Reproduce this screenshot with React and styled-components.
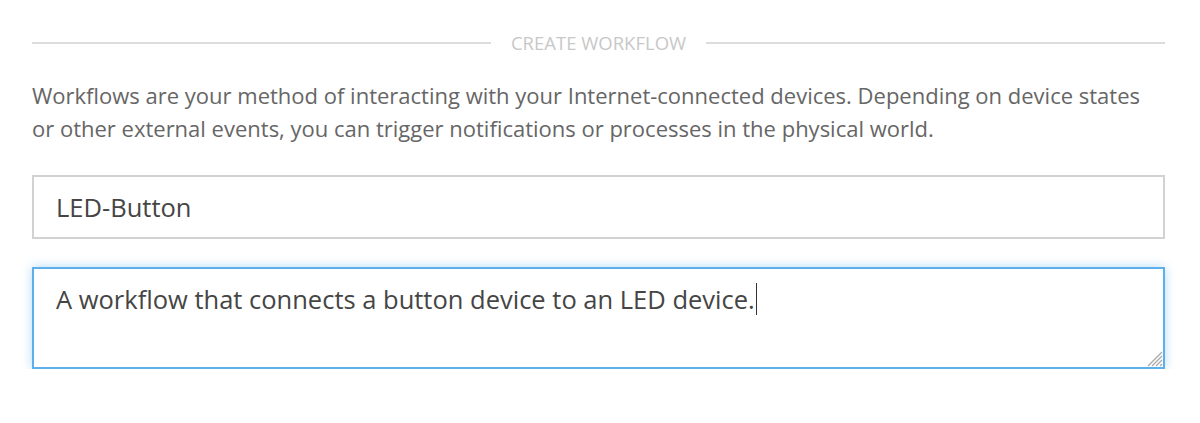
import styled, { createGlobalStyle } from 'styled-components';

const GlobalStyle = createGlobalStyle`
  html, body {
    margin: 0;
    padding: 0;
    background: #fff;
  }
  body {
    font-family: 'Open Sans', 'Noto Sans', sans-serif;
  }
`;

const Page = styled.div`
  padding: 31px 35px 0 32px;
`;

const SectionHeader = styled.div`
  display: flex;
  align-items: center;
  gap: 20px;

  &::before,
  &::after {
    content: '';
    flex: 1;
    height: 2px;
    background: #dcdcdc;
  }
`;

const SectionTitle = styled.h3`
  margin: 0;
  font-size: 18.5px;
  font-weight: 400;
  text-transform: uppercase;
  color: #c8c8c8;
  line-height: 24px;
`;

const Intro = styled.p`
  margin: 24px 0 0;
  font-size: 22px;
  line-height: 33px;
  color: #666;
`;

const Field = styled.div`
  position: relative;
  box-sizing: border-box;
  margin-top: ${({ $gap }) => $gap}px;
  height: ${({ $height }) => $height}px;
  padding: ${({ $multi }) => ($multi ? '14px 22px' : '0 22px')};
  display: flex;
  align-items: ${({ $multi }) => ($multi ? 'flex-start' : 'center')};
  border: 2px solid ${({ $focused }) => ($focused ? '#5eb0ec' : '#d2d2d2')};
  box-shadow: ${({ $focused }) => ($focused ? '0 0 10px rgba(94, 176, 236, 0.45)' : 'none')};
  font-size: 25.5px;
  line-height: 32px;
  color: #454545;
`;

const Caret = styled.span`
  display: inline-block;
  width: 1px;
  height: 32px;
  margin-left: 1px;
  vertical-align: top;
  background: #333;
`;

const Grip = styled.svg`
  position: absolute;
  right: 0;
  bottom: 0;
`;

export default function App() {
  return (
    <>
      <GlobalStyle />
      <Page>
        <SectionHeader>
          <SectionTitle>Create Workflow</SectionTitle>
        </SectionHeader>
        <Intro>
          Workflows are your method of interacting with your Internet-connected devices. Depending on device states
          <br />
          or other external events, you can trigger notifications or processes in the physical world.
        </Intro>
        <Field $gap={30} $height={64}>LED-Button</Field>
        <Field $gap={28} $height={102} $multi $focused>
          <span>
            A workflow that connects a button device to an LED device.
            <Caret />
          </span>
          <Grip width="16" height="16" viewBox="0 0 16 16">
            <g stroke="#a8a8a8" strokeWidth="1.2">
              <line x1="15" y1="1" x2="1" y2="15" />
              <line x1="15" y1="5" x2="5" y2="15" />
              <line x1="15" y1="9" x2="9" y2="15" />
              <line x1="15" y1="13" x2="13" y2="15" />
            </g>
          </Grip>
        </Field>
      </Page>
    </>
  );
}
